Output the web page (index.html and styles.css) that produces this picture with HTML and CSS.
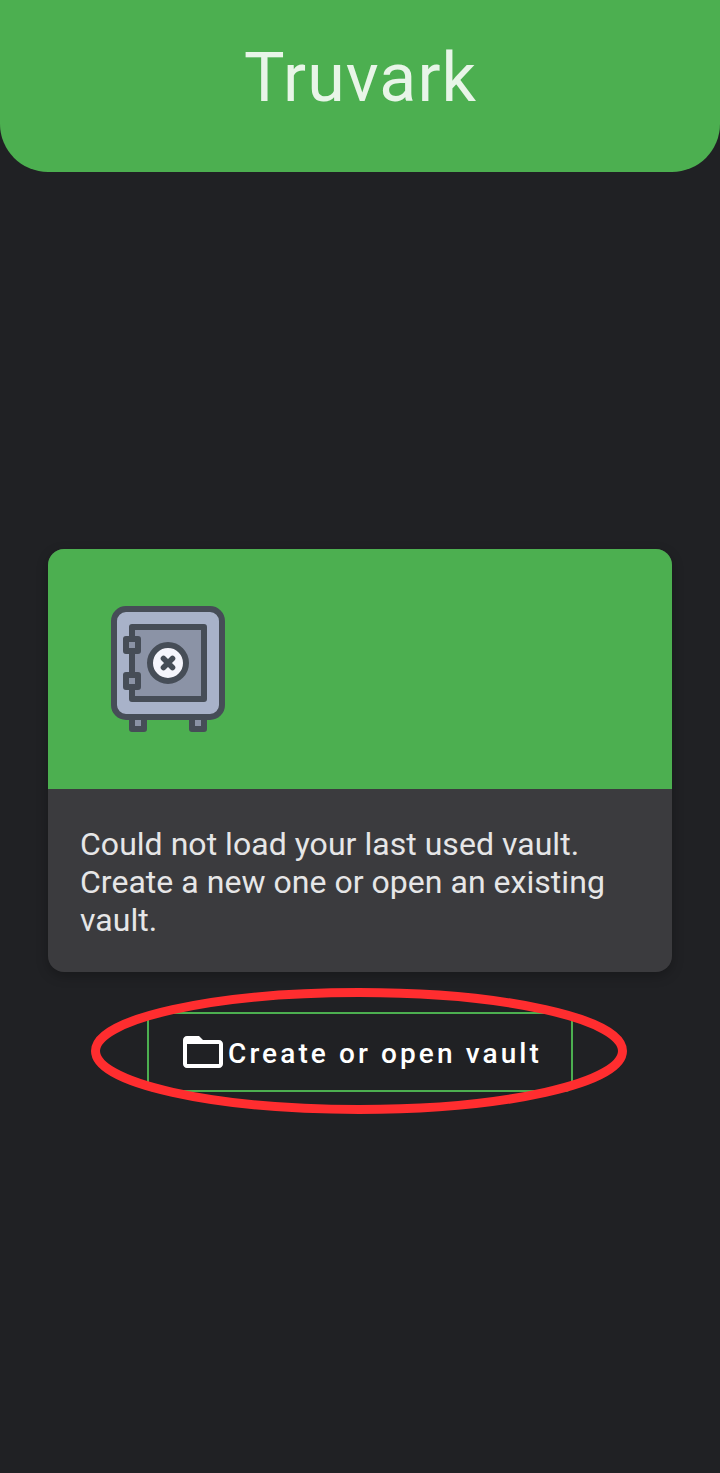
FILE: index.html
```html
<!DOCTYPE html>
<html lang="en">
<head>
<meta charset="utf-8">
<title>Truvark</title>
<link rel="stylesheet" href="styles.css">
</head>
<body>
<header class="header"><h1 class="title">Truvark</h1></header>
<main class="main">
  <section class="card">
    <div class="card-media">
      <svg class="safe" width="128" height="128" viewBox="0 0 128 128" fill="none" stroke="#464d57" stroke-width="6" stroke-linejoin="round">
        <path d="M28 108h12v16H28zM88 108h12v16H88z" fill="#8b93a6"/>
        <rect x="10" y="4" width="108" height="108" rx="12" fill="#a8b2c9"/>
        <path d="M28 22h72v72H28z" fill="#8b93a6"/>
        <path d="M22 34h12v12H22zM22 70h12v12H22z" fill="#8b93a6"/>
        <circle cx="64" cy="58" r="18" fill="#f5f5fc"/>
        <path d="M59.500 53.500l9 9M68.500 53.500l-9 9" stroke-linecap="round" stroke-width="5.600"/>
      </svg>
    </div>
    <p class="card-text">Could not load your last used vault. Create a new one or open an existing vault.</p>
  </section>
  <div class="action">
    <button class="button" type="button">
      <svg class="folder" width="48" height="48" viewBox="0 0 24 24" fill="#fff"><path d="M20 6h-8l-2-2H4c-1.100 0-2 .9-2 2v12c0 1.100.9 2 2 2h16c1.100 0 2-.9 2-2V8c0-1.100-.9-2-2-2zm0 12H4V8h16v10z"/></svg>
      <span class="label">Create or open vault</span>
    </button>
    <svg class="highlight" width="536" height="126" viewBox="0 0 536 126"><ellipse cx="268" cy="63" rx="263.500" ry="58.500" fill="none" stroke="#ff2d2f" stroke-width="9"/></svg>
  </div>
</main>
</body>
</html>
```
FILE: styles.css
```css
body {
  margin: 0;
  min-height: 1473px;
  background: #202124;
  font-family: Roboto, sans-serif;
}
.header {
  height: 172px;
  box-sizing: border-box;
  padding: 38px 0 0 1px;
  background: #4caf50;
  border-radius: 0 0 48px 48px;
  text-align: center;
}
.title {
  margin: 0;
  font-size: 68px;
  line-height: 80px;
  font-weight: 400;
  letter-spacing: 1.1px;
  color: rgba(255, 255, 255, .87);
}
.main {
  display: flex;
  flex-direction: column;
  align-items: center;
  gap: 40px;
  padding-top: 377px;
}
.card {
  width: 624px;
  border-radius: 16px;
  overflow: hidden;
  background: #3b3b3e;
  box-shadow: 0 4px 12px rgba(0, 0, 0, .25);
}
.card-media {
  height: 240px;
  box-sizing: border-box;
  padding: 56px;
  background: #4caf50;
}
.safe {
  display: block;
}
.card-text {
  margin: 0;
  height: 183px;
  box-sizing: border-box;
  padding: 36px 32px 0;
  font-size: 32px;
  line-height: 38px;
  letter-spacing: .03px;
  color: #e6e6e7;
}
.action {
  position: relative;
}
.button {
  display: flex;
  align-items: center;
  width: 426px;
  height: 80px;
  box-sizing: border-box;
  padding: 0 0 0 30px;
  border: 2px solid #4caf50;
  border-radius: 8px;
  background: transparent;
  color: #fff;
  font: 500 28px/34px Roboto, sans-serif;
  letter-spacing: 3.1px;
  white-space: nowrap;
}
.folder {
  flex: none;
}
.label {
  padding: 4px 0 0 1px;
}
.highlight {
  position: absolute;
  left: -56px;
  top: -24px;
}
```
